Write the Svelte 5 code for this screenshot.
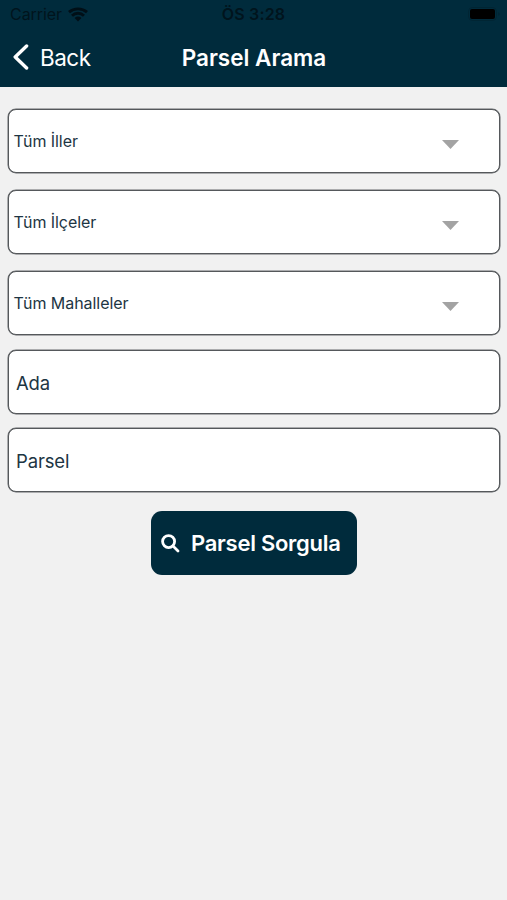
<script lang="ts">
    type Picker = {
        name: string;
        label: string;
    };

    const pickers: Picker[] = [
        { name: 'il', label: 'Tüm İller' },
        { name: 'ilce', label: 'Tüm İlçeler' },
        { name: 'mahalle', label: 'Tüm Mahalleler' }
    ];

    let ada = $state('');
    let parsel = $state('');
</script>

<div class="screen">
    <header>
        <div class="status-bar">
            <div class="carrier">
                <span class="carrier-name">Carrier</span>
                <svg class="wifi" width="20" height="15" viewBox="0 0 20 15">
                    <path d="M1 5.2C6 .7 14 .7 19 5.2" />
                    <path d="M4 8.7C7.4 5.5 12.6 5.5 16 8.7" />
                    <path class="dot" d="M6.6 11Q10 8.2 13.4 11L10 14.4Z" />
                </svg>
            </div>
            <span class="time">ÖS 3:28</span>
            <div class="battery">
                <svg width="33" height="14" viewBox="0 0 33 14">
                    <rect x="0.5" y="0.5" width="28" height="13" rx="4" fill="none" stroke="#002533" />
                    <rect x="2" y="2" width="25" height="10" rx="2" fill="#000" />
                    <path d="M30.5 5v4q2-2 0-4" fill="#00212f" />
                </svg>
            </div>
        </div>
        <nav>
            <button class="back">
                <svg width="17" height="26" viewBox="0 0 17 26">
                    <path d="M14.6 2L3.2 13L14.6 24" />
                </svg>
                <span>Back</span>
            </button>
            <h1>Parsel Arama</h1>
        </nav>
    </header>

    <main>
        <div class="pickers">
            {#each pickers as picker (picker.name)}
            <button class="box picker">
                <span>{picker.label}</span>
                <svg width="17" height="9" viewBox="0 0 17 9">
                    <path d="M0 0H17L8.5 9Z" />
                </svg>
            </button>
            {/each}
        </div>
        <div class="inputs">
            <input class="box" type="text" bind:value={ada} placeholder="Ada" />
            <input class="box" type="text" bind:value={parsel} placeholder="Parsel" />
        </div>
        <button class="query-button">
            <svg width="19" height="19" viewBox="0 0 19 19">
                <circle cx="7.6" cy="7.6" r="6" />
                <path d="M12 12L17 17" />
            </svg>
            <span>Parsel Sorgula</span>
        </button>
    </main>
</div>

<style>
    :global(body) {
        background: #f1f1f1;
    }

    .screen {
        min-height: 900px;
        font-family: Inter, "Liberation Sans", sans-serif;
    }

    button {
        border: none;
        background: none;
        padding: 0;
        font-family: inherit;
        cursor: pointer;
    }

    svg {
        display: block;
        flex: none;
    }

    header {
        box-sizing: border-box;
        height: 87px;
        background: #002b3c;
    }

    .status-bar {
        display: grid;
        grid-template-columns: 1fr auto 1fr;
        align-items: center;
        height: 28px;
        padding: 0 6px 0 10px;
        font-size: 16px;
        color: #00141d;
    }

    .carrier {
        display: flex;
        align-items: center;
        gap: 6px;
    }

    .carrier-name {
        letter-spacing: -0.05px;
    }

    .wifi path {
        fill: none;
        stroke: #000f17;
        stroke-width: 2.9;
    }

    .wifi .dot {
        fill: #000f17;
        stroke: none;
    }

    .time {
        margin-right: 4px;
        font-weight: 600;
        letter-spacing: 0.2px;
    }

    .battery {
        display: flex;
        justify-content: flex-end;
    }

    nav {
        display: grid;
        grid-template-columns: 1fr auto 1fr;
        align-items: center;
        height: 58px;
        padding: 0 11px 0 12px;
        color: #fff;
    }

    .back {
        display: flex;
        align-items: center;
        gap: 11px;
        color: #fff;
        font-size: 22.5px;
        letter-spacing: -0.5px;
    }

    .back path {
        fill: none;
        stroke: #fff;
        stroke-width: 3.4;
        stroke-linecap: round;
        stroke-linejoin: round;
    }

    h1 {
        margin: 0;
        font-size: 22.5px;
        font-weight: 600;
    }

    main {
        display: flex;
        flex-direction: column;
        align-items: center;
        padding: 22px 7px 0 8px;
    }

    .pickers,
    .inputs {
        display: flex;
        flex-direction: column;
        width: 100%;
    }

    .pickers {
        gap: 17px;
    }

    .inputs {
        gap: 14px;
        margin-top: 15px;
    }

    .box {
        box-sizing: border-box;
        width: 100%;
        height: 64px;
        border: 1px solid #55585b;
        border-radius: 8px;
        box-shadow: 0 0 0 0.5px #66696c;
        background: #fff;
        color: #1d3543;
    }

    .picker {
        display: flex;
        align-items: center;
        justify-content: space-between;
        padding: 0 40px 0 5px;
        font-size: 16px;
        letter-spacing: -0.05px;
    }

    .picker span {
        margin: 0 0 1px -0.5px;
    }

    .picker svg {
        margin-top: 7px;
    }

    .picker path {
        fill: #a3a3a3;
    }

    input {
        padding: 1px 7px 0;
        font-family: inherit;
        font-size: 18.5px;
        letter-spacing: -0.15px;
        outline: none;
    }

    input::placeholder {
        color: #1d3543;
        opacity: 1;
    }

    .query-button {
        display: flex;
        align-items: center;
        gap: 11px;
        box-sizing: border-box;
        width: 206px;
        height: 64px;
        margin-top: 19px;
        padding-left: 10px;
        border-radius: 11px;
        background: #002b3c;
        color: #fff;
        font-size: 22px;
        font-weight: 600;
        letter-spacing: -0.26px;
        white-space: nowrap;
    }

    .query-button circle,
    .query-button path {
        fill: none;
        stroke: #fff;
        stroke-width: 2.8;
        stroke-linecap: round;
    }
</style>
